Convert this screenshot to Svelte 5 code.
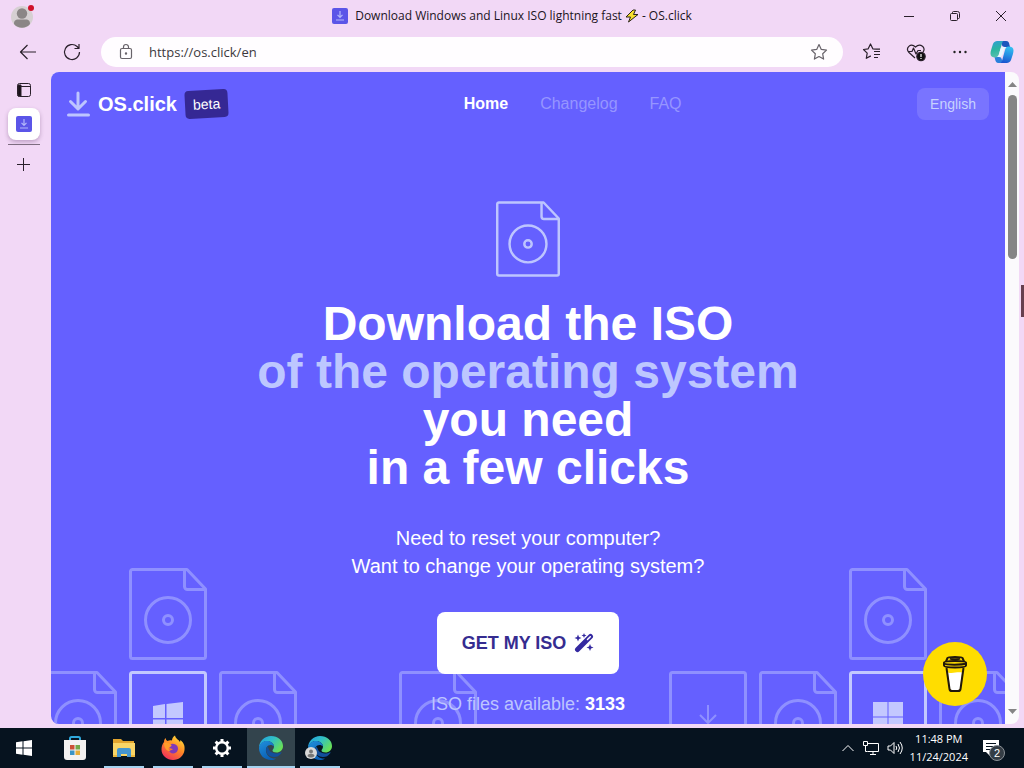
<script lang="ts">
	type Tile = 'file' | 'win10' | 'win11' | 'arrow' | '';

	const tiles: Tile[] = [
		'', 'file', '', '', '', '', '', '', '', 'file', '',
		'file', 'win10', 'file', '', 'file', '', '', 'arrow', 'file', 'win11', 'file'
	];

	const navLinks = [
		{ label: 'Home', active: true },
		{ label: 'Changelog', active: false },
		{ label: 'FAQ', active: false }
	];

	let url = $state('https://os.click/en');
</script>

{#snippet fileShape()}
	<path d="M1.5 3.5v85a2 2 0 0 0 2 2h71a2 2 0 0 0 2-2V21L58 1.500H3.500a2 2 0 0 0-2 2z" />
	<path d="M55.500 1.500v17a3 3 0 0 0 3 3h18" />
	<circle cx="39" cy="52" r="22.500" />
	<circle cx="39" cy="52" r="4.500" />
{/snippet}

{#snippet favicon()}
	<svg width="16" height="16" viewBox="0 0 16 16" aria-hidden="true">
		<rect width="16" height="16" rx="2" fill="#5b55e8" />
		<path d="M8 3v6M5.500 6.800 8 9.300l2.500-2.500M4 12h8" fill="none" stroke="#b3b8fa" stroke-width="1.200" />
	</svg>
{/snippet}

{#snippet edgeLogo(id: string)}
	<svg width="26" height="26" viewBox="0 0 26 26" aria-hidden="true">
		<defs>
			<linearGradient id={`${id}-top`} x1="0" y1="0" x2="1" y2="0.6">
				<stop offset="0" stop-color="#219cdf" />
				<stop offset="0.500" stop-color="#30bfc8" />
				<stop offset="1" stop-color="#68df57" />
			</linearGradient>
			<linearGradient id={`${id}-low`} x1="0" y1="0" x2="0.500" y2="1">
				<stop offset="0" stop-color="#2090dc" />
				<stop offset="1" stop-color="#0a5eb5" />
			</linearGradient>
		</defs>
		<path d="M1 13C1 6 6.500 1 13 1c7 0 12 4.500 12 10 0 4-3 6.500-6.500 6.500-2.500 0-4-1-4-2s1.500-1.500 1.500-4c0-3-3-5.500-7-5.500-4 0-7 3-8 7z" fill={`url(#${id}-top)`} />
		<path d="M1 13c.5-4.500 4-7 8-7 4 0 7 2.500 7 5.500-1-1-2-1.500-3.500-1.500C9 10 7.500 13 8 16.500c.7 4.500 5 7.500 10 7-1.500 1-3.200 1.500-5 1.500C6.500 25 1 20 1 13z" fill={`url(#${id}-low)`} />
		<path d="M9.500 11.500c-3 2-1.500 10 6 10.500 3.500.2 5.500-1 7.500-3.500 1-1 .5-1.500-.5-1-4 2-9.500.5-11-2-.8-1.200-1-2.800-2-4z" fill="#124f9b" />
	</svg>
{/snippet}

<div class="desktop">
	<div class="titlebar">
		<button class="profile" type="button" aria-label="Profile">
			<svg width="28" height="28" viewBox="0 0 28 28" aria-hidden="true">
				<circle cx="14" cy="15" r="11" fill="#d6d0d2" />
				<circle cx="14" cy="11.500" r="5.200" fill="#8b8686" />
				<path d="M6 22c0-5 3-4.500 8-4.500s8-.5 8 4.500c-4 5-12 5-16 0z" fill="#8b8686" />
				<circle cx="23" cy="6" r="3" fill="#d0112b" />
			</svg>
		</button>
		<div class="title">
			{@render favicon()}
			<span>Download Windows and Linux ISO lightning fast</span>
			<svg class="bolt" width="14" height="14" viewBox="0 0 14 14" aria-hidden="true">
				<path d="M8 1 1 8h4.500L3.500 13 13 5.500H8.500L10.500 1z" fill="#f8e02e" stroke="#2a2418" />
			</svg>
			<span>- OS.click</span>
		</div>
		<div class="window-controls">
			<button type="button" aria-label="Minimize">
				<svg width="12" height="12" viewBox="0 0 12 12"><path d="M1 6.500h10" /></svg>
			</button>
			<button type="button" aria-label="Restore">
				<svg width="12" height="12" viewBox="0 0 12 12">
					<rect x="1.500" y="3.500" width="7" height="7" rx="1" />
					<path d="M3.500 3V2.500a1 1 0 0 1 1-1h4a2 2 0 0 1 2 2v4a1 1 0 0 1-1 1H9" />
				</svg>
			</button>
			<button type="button" aria-label="Close">
				<svg width="12" height="12" viewBox="0 0 12 12"><path d="m1 1 10 10M11 1 1 11" /></svg>
			</button>
		</div>
	</div>

	<div class="toolbar">
		<button type="button" aria-label="Back">
			<svg width="20" height="20" viewBox="0 0 20 20"><path d="M18 10H2.500M9.500 3l-7 7 7 7" /></svg>
		</button>
		<button type="button" aria-label="Refresh">
			<svg width="20" height="20" viewBox="0 0 20 20">
				<path d="M17.500 10a7.500 7.500 0 1 1-2.400-5.500L17 6.500M17 2v4.500h-4.500" />
			</svg>
		</button>
		<div class="address">
			<svg class="lock" width="16" height="18" viewBox="0 0 16 18" aria-hidden="true">
				<rect x="2.500" y="5.500" width="11" height="10" rx="1.500" />
				<path d="M5.500 5.500V4a2.500 2.500 0 0 1 5 0v1.500" />
				<circle cx="8" cy="10.500" r="0.600" />
			</svg>
			<input type="text" bind:value={url} aria-label="Address" />
			<button class="star" type="button" aria-label="Add to favorites">
				<svg width="18" height="18" viewBox="0 0 18 18">
					<path d="m9 1.500 2.300 4.900 5.200.7-3.800 3.700.9 5.300L9 13.500l-4.600 2.600.9-5.300L1.500 7.100l5.200-.7z" />
				</svg>
			</button>
		</div>
		<button type="button" aria-label="Favorites">
			<svg width="20" height="20" viewBox="0 0 20 20">
				<path d="M14 7.200 10.800 6.800 8.500 2 6.200 6.800 1.500 7.500l3.700 3.600-.9 5.200 4.500-2.400M12 9.500h6M12 12.500h6M12 15.500h4M14 7.200h4" />
			</svg>
		</button>
		<button type="button" aria-label="Browser essentials">
			<svg width="20" height="20" viewBox="0 0 20 20">
				<path d="M9 16 3 10.500C-1 6 4.500.5 9.500 5c5-4.500 11 1 7.500 5M2 9.500h4L7.500 6l2.500 6 2-3.500h3" />
				<circle cx="15" cy="14.500" r="4.200" fill="#111" />
				<path class="alert" d="M15 12v3M15 16v1" />
			</svg>
		</button>
		<button type="button" aria-label="Settings and more">
			<svg width="20" height="20" viewBox="0 0 20 20">
				<g fill="#222" stroke="none">
					<circle cx="4.500" cy="10" r="1.200" /><circle cx="10" cy="10" r="1.200" /><circle cx="15.500" cy="10" r="1.200" />
				</g>
			</svg>
		</button>
		<button class="copilot" type="button" aria-label="Copilot">
			<svg width="24" height="24" viewBox="0 0 24 24">
				<defs>
					<linearGradient id="cop-left" x1="0.300" y1="0" x2="0.500" y2="1">
						<stop offset="0" stop-color="#2f9fd0" /><stop offset="0.500" stop-color="#2bb5a0" /><stop offset="1" stop-color="#5cc0b0" />
					</linearGradient>
					<linearGradient id="cop-right" x1="0.600" y1="0" x2="0.400" y2="1">
						<stop offset="0" stop-color="#35c0f0" /><stop offset="0.500" stop-color="#2590e4" /><stop offset="1" stop-color="#1b55cf" />
					</linearGradient>
				</defs>
				<g stroke="none">
					<path d="M11 1h5c2.500 0 3 1.500 3.500 4l.5 2h-5c-2 0-3-1-3.500-3z" fill="#1c55bd" />
					<path d="M13 23H8.500C6 23 5.500 21 5 19l-.5-2H9c2 0 2.500 1 3 3z" fill="#2b7fdc" />
					<path d="M8 1h5.500c-1 .5-1.500 2-2 4l-2.500 9c-.7 2.500-1.500 3.500-3.500 3.500C2 17.500.5 16 .5 13.500c0-2 1-5 2-8C3.500 2 5 1 8 1z" fill="url(#cop-left)" />
					<path d="M16 23h-5.500c1-.5 1.500-2 2-4L15 10c.7-2.500 1.500-3.500 3.500-3.500 3.500 0 5 1.500 5 4 0 2-1 5-2 8-1 3.500-2.500 4.500-5.500 4.500z" fill="url(#cop-right)" />
					<path d="M12.500 7h4c-2 .5-2.300 2-3 4.500-1 4-2 5.500-4 5.500h-3c2-.5 2.300-2 3-4.500 1-4 1.500-5.500 3-5.500z" fill="#e9f8ff" />
				</g>
			</svg>
		</button>
	</div>

	<div class="browser">
		<aside class="tabs">
			<button type="button" aria-label="Tab actions">
				<svg width="16" height="16" viewBox="0 0 16 16">
					<rect x="1.500" y="1.500" width="13" height="13" rx="2" />
					<path d="M1.500 4.500h13" />
					<path d="M2 3h3v11H2z" fill="#181018" />
				</svg>
			</button>
			<button class="tab" type="button" aria-label="OS.click">{@render favicon()}</button>
			<hr />
			<button type="button" aria-label="New tab">
				<svg width="16" height="16" viewBox="0 0 16 16"><path d="M7.500 1v13M1 7.500h13" /></svg>
			</button>
		</aside>

		<div class="viewport">
			<div class="page">
				<div class="pattern" aria-hidden="true">
					{#each tiles as tile}
						<svg class="tile" class:bright={tile.startsWith('win')} width="78" height="92" viewBox="0 0 78 92">
							{#if tile === 'file'}
								{@render fileShape()}
							{:else if tile}
								<rect x="1.500" y="1.500" width="75" height="89" rx="2" />
							{/if}
							{#if tile === 'win10'}
								<path class="solid" d="m24 35 12-2v14H24zM37.500 33 54 31v16H37.500zM24 48.500h12V62l-12-2zM37.500 48.500H54V64l-16.500-2z" />
							{:else if tile === 'win11'}
								<path class="solid" d="M24 31h14.500v14.500H24zM39.500 31H54v14.500H39.500zM24 46.500h14.500V61H24zM39.500 46.500H54V61H39.500z" />
							{:else if tile === 'arrow'}
								<path class="thin" d="M39 34v18M31 44l8 8 8-8M30 58h18" />
							{/if}
						</svg>
					{/each}
				</div>

				<header>
					<a class="brand" href="#home">
						<svg width="24" height="26" viewBox="0 0 24 26" aria-hidden="true">
							<path d="M11 2v15M3.500 10.500 11 18l7.500-7.500M1.500 24h20" />
						</svg>
						<span class="name">OS.click</span>
						<span class="beta">beta</span>
					</a>
					<nav>
						{#each navLinks as link}
							<a href={`#${link.label.toLowerCase()}`} class:active={link.active}>{link.label}</a>
						{/each}
					</nav>
					<button class="language" type="button">English</button>
				</header>

				<main>
					<svg class="hero-icon" width="64" height="76" viewBox="0 0 78 92" aria-hidden="true">
						{@render fileShape()}
					</svg>
					<h1>
						Download the ISO<br />
						<span>of the operating system</span><br />
						you need<br />
						in a few clicks
					</h1>
					<p class="lead">Need to reset your computer?<br />Want to change your operating system?</p>
					<button class="cta" type="button">
						GET MY ISO
						<svg width="20" height="20" viewBox="0 0 20 20" aria-hidden="true">
							<path d="m3.500 16.500 13-13" stroke="#3429a0" stroke-width="5" stroke-linecap="round" />
							<path d="m13.500 6.500 2.800-2.800" stroke="#fff" stroke-width="1.500" stroke-linecap="round" />
							<path d="m4 1.500 1 2.500 2.500 1L5 6 4 8.500 3 6 .5 5 3 4zM10 0l.7 1.800 1.800.7-1.800.7L10 5l-.7-1.800-1.800-.7 1.800-.7zM16 11l1 2.500 2.500 1-2.500 1L16 18l-1-2.500-2.500-1 2.500-1z" fill="#3429a0" />
						</svg>
					</button>
					<p class="count">ISO files available: <strong>3133</strong></p>
				</main>

				<a class="coffee" href="#support" aria-label="Buy me a coffee">
					<svg width="26" height="38" viewBox="0 0 26 38" aria-hidden="true">
						<path d="m4.500 12 3 22c.2 1.500 1 2 2.500 2h6c1.500 0 2.300-.5 2.500-2l3-22z" fill="#ffdd00" />
						<path d="m6 17.500 2 16c.2 1.500 1 2 2.500 2h5c1.500 0 2.300-.5 2.500-2l2-16c-5-1-9 1.500-14 0z" fill="#fff" />
						<path d="m4.500 13 3 21c.2 1.500 1 2 2.500 2h6c1.500 0 2.300-.5 2.500-2l3-21" />
						<path d="M2 7.500c0-1 5-1.500 11-1.500s11 .5 11 1.500v3c0 1.500-5 2-11 2s-11-.5-11-2z" fill="#ffdd00" />
						<path d="M2 8.500c2 1.500 18 1.500 22 0M4 6.500 5.500 3c.5-1.300 14.500-1.300 15 0L22 6.500M8 3.500c3 1 7 1 10 0" />
					</svg>
				</a>
			</div>
			<div class="scrollbar" aria-hidden="true">
				<svg width="9" height="5" viewBox="0 0 9 5"><path d="M0 5 4.500 0 9 5z" /></svg>
				<div class="track"><div class="thumb"></div></div>
				<svg width="9" height="5" viewBox="0 0 9 5"><path d="m0 0 4.500 5L9 0z" /></svg>
			</div>
		</div>
		<div class="edge"></div>
	</div>

	<footer class="taskbar">
		<button class="start" type="button" aria-label="Start">
			<svg width="16" height="16" viewBox="0 0 16 16"><path d="m0 2.300 6.500-1v6.200H0zM7.500 1.200 16 0v7.500H7.500zM0 8.500h6.500v6.200l-6.500-1zM7.500 8.500H16V16l-8.500-1.200z" fill="#fff" /></svg>
		</button>
		<button type="button" aria-label="Microsoft Store">
			<svg width="26" height="26" viewBox="0 0 26 26">
				<path d="M8 6V3.500A1.500 1.500 0 0 1 9.500 2h7A1.500 1.500 0 0 1 18 3.500V6" fill="none" stroke="#2fa8dc" stroke-width="2" />
				<path d="M2 5h22v17a3 3 0 0 1-3 3H5a3 3 0 0 1-3-3z" fill="#f4f2f1" />
				<path d="M8 10h4.500v4.500H8z" fill="#cc5036" /><path d="M13.500 10H18v4.500h-4.500z" fill="#73a848" />
				<path d="M8 15.500h4.500V20H8z" fill="#3b94c5" /><path d="M13.500 15.500H18V20h-4.500z" fill="#e6ad38" />
			</svg>
		</button>
		<button class="running" type="button" aria-label="File Explorer">
			<svg width="24" height="24" viewBox="0 0 24 24">
				<path d="M1 3h8l2 2h11v4H1z" fill="#e2a52e" /><path d="M1 7h22v13H1z" fill="#f9d566" />
				<path d="M5 14a2 2 0 0 1 2-2h10a2 2 0 0 1 2 2v7h-4v-3H9v3H5z" fill="#4596cf" />
				<path d="M1 19h4v2H1zM19 19h4v2h-4z" fill="#edb93e" />
			</svg>
		</button>
		<button class="running" type="button" aria-label="Firefox">
			<svg width="26" height="26" viewBox="0 0 26 26">
				<defs>
					<linearGradient id="fox" x1="0.800" y1="0" x2="0.200" y2="1">
						<stop offset="0" stop-color="#ffe33b" /><stop offset="0.450" stop-color="#ff8a25" /><stop offset="1" stop-color="#f0295f" />
					</linearGradient>
				</defs>
				<path d="M4 7c0-2 1-3.500 1.500-4 .3 1.500 1 2.500 2 3 1.500-.7 3-.8 4.500-.5 0-2 1-4 3-5 .5 3 3.500 4 5 6.500l.5-2C24 8 25 11 24.500 15c-.7 6-5.500 10-11.500 10S1.500 20.500 1.500 14.500C1.500 11 2.500 9 4 7z" fill="url(#fox)" />
				<path d="M8.500 11c1-2 4-3 7-1.500 3 1.500 3.500 6 .5 8-3 2-7 .5-7.500-3 1.500 1 3 1 4.500-.5-2 0-3.500-1-4.500-3z" fill="#8039b8" />
				<path d="M4 8c2-1.500 4 0 6 1 2 .7 2 2 0 3-2 .6-2 3 1 4-4 1-7-3-7-8z" fill="#ff9c2a" />
			</svg>
		</button>
		<button class="running" type="button" aria-label="Settings">
			<svg width="20" height="20" viewBox="0 0 20 20">
				<circle cx="10" cy="10" r="5.800" fill="none" stroke="#fff" stroke-width="2.400" />
				<path d="M10 1v3M10 16v3M1 10h3M16 10h3M3.600 3.600l2.200 2.200M14.200 14.200l2.200 2.200M3.600 16.400l2.200-2.200M14.200 5.800l2.200-2.200" stroke="#fff" stroke-width="3" />
			</svg>
		</button>
		<button class="running current" type="button" aria-label="Microsoft Edge">{@render edgeLogo('edge')}</button>
		<button class="running with-avatar" type="button" aria-label="Microsoft Edge, profile">
			{@render edgeLogo('edge-profile')}
			<svg class="avatar" width="12" height="12" viewBox="0 0 12 12">
				<circle cx="6" cy="6" r="6" fill="#d8d8d8" /><circle cx="6" cy="4.500" r="2" fill="#777" /><path d="M2.500 9c0-3 7-3 7 0-2 2-5 2-7 0z" fill="#777" />
			</svg>
		</button>

		<div class="tray">
			<button type="button" aria-label="Show hidden icons">
				<svg width="14" height="14" viewBox="0 0 14 14"><path d="m1.500 10 5.500-5.500 5.500 5.500" /></svg>
			</button>
			<button type="button" aria-label="Network">
				<svg width="18" height="16" viewBox="0 0 18 16"><path d="M5.500 3.500h11v8h-11M11 12v3M8 14.500h6M1.500 1.500h4v4h-4zM3.500 6v5.500h2" /></svg>
			</button>
			<button type="button" aria-label="Volume">
				<svg width="16" height="16" viewBox="0 0 16 16"><path d="M1 6v4h2.500L7 13.500v-11L3.500 6zM9 6q1.500 2 0 4M11 4q3 4 0 8M13 2q4.500 6 0 12" /></svg>
			</button>
			<div class="clock"><span>11:48 PM</span><span>11/24/2024</span></div>
			<button class="notifications" type="button" aria-label="2 notifications">
				<svg width="18" height="18" viewBox="0 0 18 18"><path d="M1 1h16v12H8v4l-4-4H1z" fill="#fff" stroke="none" /><path d="M4 4.500h10M4 7.500h10M4 10.500h6" stroke="#06131f" /></svg>
				<span class="badge">2</span>
			</button>
		</div>
	</footer>
</div>

<style>
	:global(body) {
		margin: 0;
		overflow: hidden;
	}
	.desktop {
		height: 100vh;
		display: flex;
		flex-direction: column;
		background: #f2d8f6;
		color: #1c141d;
		font-family: 'Liberation Sans', Arial, sans-serif;
	}
	.desktop * {
		box-sizing: border-box;
	}
	button {
		display: flex;
		align-items: center;
		justify-content: center;
		flex: none;
		padding: 0;
		border: 0;
		background: none;
		font: inherit;
		color: inherit;
		cursor: pointer;
	}
	svg {
		display: block;
		flex: none;
	}
	a {
		color: inherit;
		text-decoration: none;
	}

	/* browser chrome */
	.titlebar {
		flex: none;
		height: 32px;
		display: grid;
		grid-template-columns: 1fr auto 1fr;
		align-items: center;
	}
	.profile {
		justify-self: start;
		padding-left: 8px;
	}
	.title {
		display: flex;
		align-items: center;
		gap: 3px;
		font-family: 'Open Sans', 'Noto Sans', sans-serif;
		font-size: 12px;
		line-height: 20px;
		white-space: nowrap;
	}
	.title span:first-of-type {
		margin-left: 4px;
	}
	.window-controls {
		justify-self: end;
		display: flex;
	}
	.window-controls button {
		width: 46px;
		height: 32px;
	}
	.window-controls svg,
	.toolbar svg,
	.tabs button > svg {
		fill: none;
		stroke: #2a202b;
		stroke-linejoin: round;
	}
	.toolbar {
		flex: none;
		height: 40px;
		display: flex;
		align-items: center;
		gap: 24px;
		padding: 0 10px 0 18px;
	}
	.toolbar svg {
		stroke-width: 1.2;
	}
	.toolbar .alert {
		stroke: #fff;
	}
	.copilot {
		margin-left: -4px;
	}
	.address {
		flex: 1;
		min-width: 0;
		height: 30px;
		margin: 0 -5px;
		padding: 0 15px 0 17px;
		display: flex;
		align-items: center;
		gap: 15px;
		border-radius: 15px;
		background: #fffdff;
	}
	.address svg {
		stroke: #68636a;
	}
	.address input {
		flex: 1;
		min-width: 0;
		padding: 0;
		border: 0;
		outline: none;
		background: none;
		color: #3c393d;
		font-family: 'Open Sans', 'Noto Sans', sans-serif;
		font-size: 13px;
	}
	.browser {
		flex: 1;
		min-height: 0;
		display: flex;
		padding-bottom: 4px;
	}
	.tabs {
		flex: none;
		width: 51px;
		padding: 10px 11px 0 8px;
		display: flex;
		flex-direction: column;
		align-items: center;
	}
	.tab {
		width: 32px;
		height: 32px;
		margin: 10px 0 4px;
		border-radius: 8px;
		background: #fff;
		box-shadow: 0 2px 4px rgba(70, 30, 80, 0.3);
	}
	.tabs .tab :global(svg) {
		stroke: none;
	}
	hr {
		width: 32px;
		height: 1px;
		margin: 0 0 12px;
		border: 0;
		background: #7d6c80;
	}
	.viewport {
		flex: 1;
		min-width: 0;
		display: flex;
		overflow: hidden;
		border-radius: 8px;
		background: #fbfafc;
	}
	.scrollbar {
		flex: none;
		width: 14px;
		padding: 10px 0;
		display: flex;
		flex-direction: column;
		align-items: center;
		gap: 8px;
		fill: #858585;
	}
	.track {
		flex: 1;
	}
	.thumb {
		width: 9px;
		height: 27%;
		border-radius: 5px;
		background: #858585;
	}
	.edge {
		flex: none;
		width: 5px;
		background: linear-gradient(#66404f, #66404f) right 213px / 3px 32px no-repeat;
	}

	/* web page */
	.page {
		position: relative;
		flex: 1;
		min-width: 0;
		overflow: hidden;
		background: #6560ff;
		color: #fff;
	}
	.pattern {
		position: absolute;
		top: 496px;
		left: 50%;
		transform: translateX(-50%);
		display: grid;
		grid-template-columns: repeat(11, 78px);
		gap: 11px 12px;
	}
	.tile,
	.hero-icon,
	.brand svg {
		fill: none;
		stroke: #8f90ff;
		stroke-width: 3;
		stroke-linejoin: round;
	}
	.tile.bright {
		stroke: #c3c8ff;
	}
	.tile .solid {
		fill: #c3c8ff;
		stroke: none;
	}
	.tile .thin {
		stroke-width: 2;
	}
	header {
		position: relative;
		height: 64px;
		padding: 0 16px;
		display: flex;
		align-items: center;
		justify-content: space-between;
	}
	.brand {
		display: flex;
		align-items: center;
		gap: 7px;
	}
	.brand svg {
		stroke: #bdc5ff;
		stroke-linecap: round;
	}
	.name {
		font-size: 20px;
		font-weight: 700;
		line-height: 28px;
	}
	.beta {
		margin-left: 1px;
		padding: 4px 8px;
		border-radius: 4px;
		background: #352894;
		font-size: 14px;
		line-height: 20px;
		transform: rotate(-3deg);
	}
	nav {
		display: flex;
		gap: 32px;
		font-size: 16px;
		line-height: 24px;
		color: #9695ff;
	}
	nav .active {
		color: #fff;
		font-weight: 700;
	}
	.language {
		height: 32px;
		padding: 0 13px;
		border-radius: 8px;
		background: #7974ff;
		color: #c7d2fe;
		font-size: 14px;
	}
	main {
		position: relative;
		padding-top: 65px;
		display: flex;
		flex-direction: column;
		align-items: center;
		text-align: center;
	}
	.hero-icon {
		stroke: #bdc5ff;
	}
	h1 {
		margin: 23px 0 32px;
		font-size: 48px;
		font-weight: 700;
		line-height: 48px;
	}
	h1 span {
		color: #bdc7ff;
	}
	.lead {
		margin: 0 0 32px;
		font-size: 20px;
		line-height: 28px;
	}
	.cta {
		height: 62px;
		padding: 0 25px;
		gap: 8px;
		border-radius: 8px;
		background: #fff;
		color: #352c90;
		font-size: 18px;
		font-weight: 700;
	}
	.count {
		margin: 16px 0 0;
		color: #bdc5ff;
		font-size: 18px;
		line-height: 28px;
	}
	.count strong {
		color: #fff;
	}
	.coffee {
		position: absolute;
		right: 18px;
		bottom: 18px;
		width: 64px;
		height: 64px;
		border-radius: 50%;
		display: flex;
		align-items: center;
		justify-content: center;
		background: #ffdd00;
	}
	.coffee svg {
		fill: none;
		stroke: #21180c;
		stroke-width: 2;
		stroke-linejoin: round;
	}
	.coffee path:nth-child(-n + 2) {
		stroke: none;
	}

	/* taskbar */
	.taskbar {
		flex: none;
		height: 40px;
		display: flex;
		gap: 1px;
		background: #06131f;
		color: #fff;
	}
	.taskbar > button {
		position: relative;
		width: 48px;
	}
	.taskbar .start {
		margin-right: 2px;
	}
	.running::after {
		content: '';
		position: absolute;
		inset: auto 4px 0;
		height: 2px;
		background: #a5d3f0;
	}
	.current {
		background: #33444d;
	}
	.current::after {
		inset: auto 0 0;
	}
	.avatar {
		position: absolute;
		left: 9px;
		bottom: 9px;
	}
	.tray {
		margin-left: auto;
		padding-right: 24px;
		display: flex;
		align-items: center;
		gap: 7px;
	}
	.tray svg {
		fill: none;
		stroke: #fff;
	}
	.clock {
		display: flex;
		flex-direction: column;
		align-items: center;
		font-family: 'Open Sans', 'Noto Sans', sans-serif;
		font-size: 11px;
		line-height: 18px;
	}
	.notifications {
		position: relative;
		margin-left: 7px;
	}
	.badge {
		position: absolute;
		left: 7px;
		top: 6px;
		width: 16px;
		height: 16px;
		border: 1px solid #8b9197;
		border-radius: 50%;
		background: #343d45;
		font-size: 11px;
		line-height: 14px;
	}
</style>
